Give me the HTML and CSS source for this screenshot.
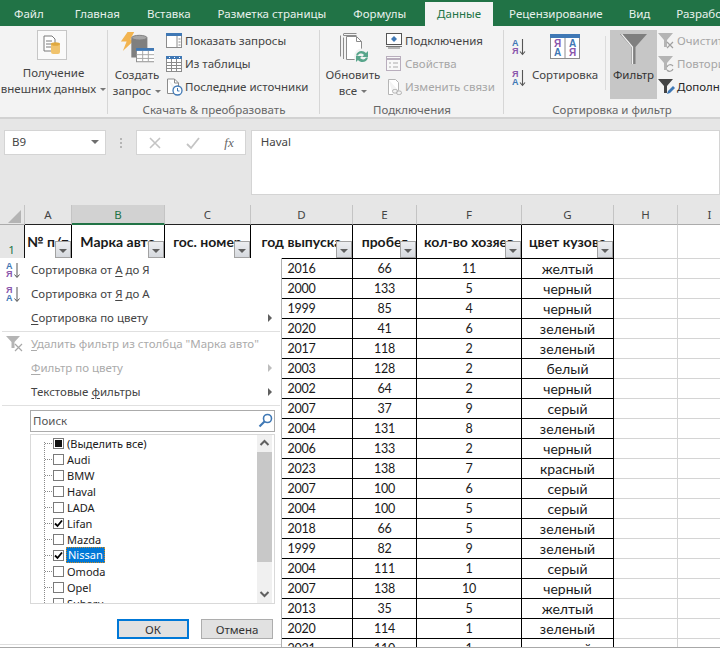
FILE: index.html
```html
<!DOCTYPE html>
<html lang="ru">
<head>
<meta charset="utf-8">
<title>Excel</title>
<link rel="stylesheet" href="styles.css">
</head>
<body>
<div class="app">
  <nav class="tabs">
    <span class="tab">Файл</span><span class="tab">Главная</span><span class="tab">Вставка</span><span class="tab">Разметка страницы</span><span class="tab">Формулы</span><span class="tab active">Данные</span><span class="tab">Рецензирование</span><span class="tab">Вид</span><span class="tab">Разработчик</span>
  </nav>
  <section class="ribbon">
    <div class="group g1">
      <div class="group-body">
        <div class="big big-get">
          <div class="icon-frame">
            <svg width="22" height="22" viewBox="0 0 22 22"><path d="M3 2h8l3 3v12H3z" fill="#fff" stroke="#7a7a7a"/><path d="M5 7h6M5 10h6M5 13h5" stroke="#7a7a7a"/><rect x="10" y="9" width="9" height="11" rx="2" fill="#f0c36d"/><ellipse cx="14.500" cy="10" rx="4.500" ry="1.800" fill="#e0a93f"/></svg>
          </div>
          <div class="big-label">Получение<br>внешних данных <i class="caret"></i></div>
        </div>
      </div>
      <div class="group-label"></div>
    </div>
    <div class="group g2">
      <div class="group-body">
        <div class="big big-query">
          <svg class="big-icon" width="34" height="34" viewBox="0 0 36 36"><path d="M8 0h7l-4 8h5L3 20l4-10H1z" fill="#f2b450"/><path d="M12 7c0-4 17-4 17 0v20H12z" fill="#7f7f7f"/><ellipse cx="20.500" cy="6" rx="8" ry="2.500" fill="#a6a6a6" stroke="#7f7f7f"/><rect x="17.500" y="17.500" width="19" height="14" fill="#fff" stroke="#8c8c8c"/><rect x="17" y="17" width="20" height="3" fill="#3f78b5"/><path d="M17.500 24h19M17.500 28h19M24 20v11M30 20v11" stroke="#a6a6a6"/></svg>
          <div class="big-label">Создать<br>запрос <i class="caret"></i></div>
        </div>
        <div class="small-col col-q">
          <div class="small"><svg width="17" height="16" viewBox="0 0 17 16"><rect x=".5" y=".5" width="15" height="14" fill="#fff" stroke="#8c8c8c"/><rect y="0" width="16" height="3" fill="#3f78b5"/><path d="M11 3v12M12.500 6h2M12.500 9h2M12.500 12h2" stroke="#8c8c8c"/></svg><span>Показать запросы</span></div>
          <div class="small"><svg width="17" height="16" viewBox="0 0 17 16"><rect x=".5" y=".5" width="15" height="15" fill="#fff" stroke="#8c8c8c"/><rect y="0" width="16" height="3" fill="#3f78b5"/><path d="M1 6.500h14M1 9.500h14M1 12.500h14M5.500 3v12M10.500 3v12" stroke="#8c8c8c"/><path d="M3 1.500h1M8 1.500h1M13 1.500h1" stroke="#fff"/></svg><span>Из таблицы</span></div>
          <div class="small"><svg width="17" height="18" viewBox="0 0 17 18"><path d="M1.500 1h7l4 4v7M9 15.500H1.500V1" fill="#fff" stroke="#8c8c8c"/><path d="M8.500 1v4h4" fill="none" stroke="#8c8c8c"/><circle cx="11.500" cy="12.500" r="4.500" fill="#fff" stroke="#3f78b5" stroke-width="1.300"/><path d="M11.500 10v3h2" fill="none" stroke="#3f78b5"/></svg><span>Последние источники</span></div>
        </div>
      </div>
      <div class="group-label">Скачать &amp; преобразовать</div>
    </div>
    <div class="group g3">
      <div class="group-body">
        <div class="big big-refresh">
          <svg class="big-icon" width="32" height="32" viewBox="0 0 32 32"><path d="M1.500 2.500v21M4.500.5h13M4.500 4.500V26" fill="none" stroke="#8c8c8c"/><path d="M7.500 3.500h10l5 5v18h-15z" fill="#fff" stroke="#8c8c8c"/><path d="M17.500 3.500v5h5" fill="none" stroke="#8c8c8c"/><path d="M4.500 1v1.500h13" fill="none" stroke="#8c8c8c"/><circle cx="23" cy="23.500" r="8" fill="#f3f3f3"/><path d="M17 22.500c1-5 7-6 10-2.500l2-2v6h-6l2-2c-2-2-5-2-6 .5zM29 24.500c-1 5-7 6-10 2.500l-2 2v-6h6l-2 2c2 2 5 2 6-.5z" fill="#58a58b"/></svg>
          <div class="big-label">Обновить<br>все <i class="caret"></i></div>
        </div>
        <div class="small-col col-c">
          <div class="small"><svg width="17" height="16" viewBox="0 0 17 16"><rect x=".5" y=".5" width="15" height="11" fill="#fff" stroke="#555"/><path d="M0 13.500h16M2 15h12" stroke="#777"/><path d="M8 3l3 3-3 3-3-3z" fill="#3f78b5"/></svg><span>Подключения</span></div>
          <div class="small off"><svg width="17" height="16" viewBox="0 0 17 16"><rect x=".5" y=".5" width="14" height="14" fill="#f8f8f8" stroke="#b9aebd"/><path d="M1 3h13" stroke="#b9aebd" stroke-width="2"/><path d="M3 7h2M3 11h2M7 7h5M7 11h5" stroke="#aaa"/></svg><span>Свойства</span></div>
          <div class="small off"><svg width="17" height="18" viewBox="0 0 17 18"><path d="M2.500 1.500h7l3 3v8M7 16.500H2.500v-15" fill="#fff" stroke="#b5b5b5"/><rect x="6.500" y="11.500" width="5" height="3.500" rx="1.700" fill="none" stroke="#b5b5b5"/><rect x="10.500" y="13" width="5" height="3.500" rx="1.700" fill="none" stroke="#b5b5b5"/></svg><span>Изменить связи</span></div>
        </div>
      </div>
      <div class="group-label">Подключения</div>
    </div>
    <div class="group g4">
      <div class="group-body">
        <div class="sort-col">
          <svg width="18" height="20" viewBox="0 0 18 20"><text class="lt lt-b" x="0" y="8">А</text><text class="lt lt-p" x="0" y="16">Я</text><path d="M10.500 1v15M8 13.500l2.500 3 2.500-3" fill="none" stroke="#555" stroke-width="1.100"/></svg>
          <svg width="18" height="20" viewBox="0 0 18 20"><text class="lt lt-p" x="0" y="8">Я</text><text class="lt lt-b" x="0" y="16">А</text><path d="M10.500 1v15M8 13.500l2.500 3 2.500-3" fill="none" stroke="#555" stroke-width="1.100"/></svg>
        </div>
        <div class="big big-sort">
          <svg class="big-icon" width="30" height="26" viewBox="0 0 30 26"><rect x=".5" y=".5" width="29" height="24" fill="#fff" stroke="#8c8c8c"/><rect width="30" height="4" fill="#3f78b5"/><path d="M15 4v20" stroke="#8c8c8c"/><text class="lt2 lt-p" x="4" y="13">Я</text><text class="lt2 lt-b" x="4" y="22">А</text><text class="lt2 lt-b" x="19" y="13">А</text><text class="lt2 lt-p" x="19" y="22">Я</text></svg>
          <div class="big-label">Сортировка</div>
        </div>
        <i class="thin-sep"></i>
        <div class="big big-filter">
          <svg class="big-icon" width="32" height="30" viewBox="0 0 32 30"><path d="M0 0h27L15.500 13v17h-4V13z" transform="translate(2 0)" fill="#7f7f7f"/><path d="M3 0l11 13v17M29 0" fill="none" stroke="#f2f2f2" stroke-width="1.200" transform="translate(.5 0)"/></svg>
          <div class="big-label">Фильтр</div>
        </div>
        <div class="small-col col-f">
          <div class="small off"><svg width="17" height="18" viewBox="0 0 17 18"><path d="M0 1h15L9 8v7H6V8z" fill="#b5b5b5"/><path d="M9 10l6 6M15 10l-6 6" stroke="#a0a0a0" stroke-width="1.200"/></svg><span>Очистить</span></div>
          <div class="small off"><svg width="17" height="18" viewBox="0 0 17 18"><path d="M0 1h15L9 8v7H6V8z" fill="#b5b5b5"/><path d="M9 12a3.500 3.500 0 0 1 6-1M15 14a3.500 3.500 0 0 1-6 1" fill="none" stroke="#a0a0a0" stroke-width="1.200"/></svg><span>Повторить</span></div>
          <div class="small dark"><svg width="17" height="18" viewBox="0 0 17 18"><path d="M0 1h15L9 8v7H6V8z" fill="#444"/><path d="M9 16l1-3 5-5 2 2-5 5z" fill="#3f78b5"/></svg><span>Дополнительно</span></div>
        </div>
      </div>
      <div class="group-label">Сортировка и фильтр</div>
    </div>
  </section>
  <section class="formula">
    <div class="namebox"><span>B9</span><i class="caret dark-caret"></i></div>
    <i class="dots"></i>
    <div class="fx-box">
      <svg width="14" height="14" viewBox="0 0 14 14"><path d="M2 2l10 10M12 2L2 12" stroke="#c4c4c4" stroke-width="1.600"/></svg>
      <svg width="16" height="14" viewBox="0 0 16 14"><path d="M2 8l4 4 8-10" fill="none" stroke="#c4c4c4" stroke-width="1.800"/></svg>
      <span class="fx">fx</span>
    </div>
    <div class="formula-input">Haval</div>
  </section>
  <section class="sheet">
    <table class="grid">
      <colgroup><col class="w0"><col class="wa"><col class="wb"><col class="wc"><col class="wd"><col class="we"><col class="wf"><col class="wg"><col class="wh"><col class="wi"></colgroup>
      <thead>
        <tr class="cols"><th class="corner"><svg width="13" height="13" viewBox="0 0 14 14"><path d="M14 0v14H0z" fill="#b4b4b4"/></svg></th><th>A</th><th class="sel">B</th><th>C</th><th>D</th><th>E</th><th>F</th><th>G</th><th class="out">H</th><th class="out">I</th></tr>
      </thead>
      <tbody>
        <tr class="head"><th class="rownum">1</th><td><div class="hcell"><span>№ п/п</span><i class="fbtn"></i></div></td><td><div class="hcell"><span>Марка авто</span><i class="fbtn"></i></div></td><td><div class="hcell"><span>гос. номер</span><i class="fbtn"></i></div></td><td><div class="hcell"><span>год выпуска</span><i class="fbtn"></i></div></td><td><div class="hcell"><span>пробег</span><i class="fbtn"></i></div></td><td><div class="hcell"><span>кол-во хозяев</span><i class="fbtn"></i></div></td><td><div class="hcell"><span>цвет кузова</span><i class="fbtn"></i></div></td><td class="e"></td><td class="e"></td></tr>
        <tr><th class="rownum">2</th><td></td><td></td><td></td><td>2016</td><td>66</td><td>11</td><td>желтый</td><td class="e"></td><td class="e"></td></tr>
        <tr><th class="rownum">3</th><td></td><td></td><td></td><td>2000</td><td>133</td><td>5</td><td>черный</td><td class="e"></td><td class="e"></td></tr>
        <tr><th class="rownum">4</th><td></td><td></td><td></td><td>1999</td><td>85</td><td>4</td><td>черный</td><td class="e"></td><td class="e"></td></tr>
        <tr><th class="rownum">5</th><td></td><td></td><td></td><td>2020</td><td>41</td><td>6</td><td>зеленый</td><td class="e"></td><td class="e"></td></tr>
        <tr><th class="rownum">6</th><td></td><td></td><td></td><td>2017</td><td>118</td><td>2</td><td>зеленый</td><td class="e"></td><td class="e"></td></tr>
        <tr><th class="rownum">7</th><td></td><td></td><td></td><td>2003</td><td>128</td><td>2</td><td>белый</td><td class="e"></td><td class="e"></td></tr>
        <tr><th class="rownum">8</th><td></td><td></td><td></td><td>2002</td><td>64</td><td>2</td><td>черный</td><td class="e"></td><td class="e"></td></tr>
        <tr><th class="rownum">9</th><td></td><td></td><td></td><td>2007</td><td>37</td><td>9</td><td>серый</td><td class="e"></td><td class="e"></td></tr>
        <tr><th class="rownum">10</th><td></td><td></td><td></td><td>2004</td><td>131</td><td>8</td><td>зеленый</td><td class="e"></td><td class="e"></td></tr>
        <tr><th class="rownum">11</th><td></td><td></td><td></td><td>2006</td><td>133</td><td>2</td><td>черный</td><td class="e"></td><td class="e"></td></tr>
        <tr><th class="rownum">12</th><td></td><td></td><td></td><td>2023</td><td>138</td><td>7</td><td>красный</td><td class="e"></td><td class="e"></td></tr>
        <tr><th class="rownum">13</th><td></td><td></td><td></td><td>2007</td><td>100</td><td>6</td><td>серый</td><td class="e"></td><td class="e"></td></tr>
        <tr><th class="rownum">14</th><td></td><td></td><td></td><td>2004</td><td>100</td><td>5</td><td>серый</td><td class="e"></td><td class="e"></td></tr>
        <tr><th class="rownum">15</th><td></td><td></td><td></td><td>2018</td><td>66</td><td>5</td><td>зеленый</td><td class="e"></td><td class="e"></td></tr>
        <tr><th class="rownum">16</th><td></td><td></td><td></td><td>1999</td><td>82</td><td>9</td><td>зеленый</td><td class="e"></td><td class="e"></td></tr>
        <tr><th class="rownum">17</th><td></td><td></td><td></td><td>2004</td><td>111</td><td>1</td><td>серый</td><td class="e"></td><td class="e"></td></tr>
        <tr><th class="rownum">18</th><td></td><td></td><td></td><td>2007</td><td>138</td><td>10</td><td>черный</td><td class="e"></td><td class="e"></td></tr>
        <tr><th class="rownum">19</th><td></td><td></td><td></td><td>2013</td><td>35</td><td>5</td><td>желтый</td><td class="e"></td><td class="e"></td></tr>
        <tr><th class="rownum">20</th><td></td><td></td><td></td><td>2020</td><td>114</td><td>1</td><td>зеленый</td><td class="e"></td><td class="e"></td></tr>
        <tr><th class="rownum">21</th><td></td><td></td><td></td><td>2021</td><td>110</td><td>1</td><td>черный</td><td class="e"></td><td class="e"></td></tr>
      </tbody>
    </table>
    <aside class="menu">
      <div class="mi"><svg class="mi-icon" width="18" height="20" viewBox="0 0 18 20"><text class="lt lt-b" x="0" y="8">А</text><text class="lt lt-p" x="0" y="16">Я</text><path d="M11 2v14M8.500 13.500l2.500 3 2.500-3" fill="none" stroke="#555"/></svg><span>Сортировка от <u>А</u> до Я</span></div>
      <div class="mi"><svg class="mi-icon" width="18" height="20" viewBox="0 0 18 20"><text class="lt lt-p" x="0" y="8">Я</text><text class="lt lt-b" x="0" y="16">А</text><path d="M11 2v14M8.500 13.500l2.500 3 2.500-3" fill="none" stroke="#555"/></svg><span>Сортировка от <u>Я</u> до А</span></div>
      <div class="mi"><span><u>С</u>ортировка по цвету</span><i class="arrow"></i></div>
      <hr class="msep">
      <div class="mi off"><svg class="mi-icon" width="18" height="18" viewBox="0 0 18 18"><path d="M0 1h14L8.500 7v6h-3V7z" fill="#b5b5b5"/><path d="M9 9l7 7M16 9l-7 7" stroke="#a8a8a8" stroke-width="1.200"/></svg><span><u>У</u>далить фильтр из столбца "Марка авто"</span></div>
      <div class="mi off"><span><u>Ф</u>ильтр по цвету</span><i class="arrow"></i></div>
      <div class="mi"><span>Текстовые <u>ф</u>ильтры</span><i class="arrow"></i></div>
      <hr class="msep">
      <div class="search"><span>Поиск</span><svg width="15" height="15" viewBox="0 0 15 15"><circle cx="9.500" cy="5.500" r="4" fill="none" stroke="#3f78b5" stroke-width="1.600"/><path d="M6.500 8.500L1.500 13.500" stroke="#3f78b5" stroke-width="2.200"/></svg></div>
      <div class="listbox">
        <ul class="tree">
          <li><b class="cb mixed"></b><span>(Выделить все)</span></li>
          <li><b class="cb"></b><span>Audi</span></li>
          <li><b class="cb"></b><span>BMW</span></li>
          <li><b class="cb"></b><span>Haval</span></li>
          <li><b class="cb"></b><span>LADA</span></li>
          <li><b class="cb on"><svg width="9" height="9" viewBox="0 0 9 9"><path d="M1 4.500l2.500 2.500L8 1.500" fill="none" stroke="#000" stroke-width="1.800"/></svg></b><span>Lifan</span></li>
          <li><b class="cb"></b><span>Mazda</span></li>
          <li><b class="cb on"><svg width="9" height="9" viewBox="0 0 9 9"><path d="M1 4.500l2.500 2.500L8 1.500" fill="none" stroke="#000" stroke-width="1.800"/></svg></b><span class="picked">Nissan</span></li>
          <li><b class="cb"></b><span>Omoda</span></li>
          <li><b class="cb"></b><span>Opel</span></li>
          <li><b class="cb"></b><span>Subaru</span></li>
        </ul>
        <div class="scroll">
          <svg width="15" height="17" viewBox="0 0 15 17"><path d="M3.500 10l4-4 4 4" fill="none" stroke="#606060" stroke-width="2"/></svg>
          <i class="thumb"></i>
          <svg class="sdown" width="15" height="16" viewBox="0 0 15 16"><path d="M3.500 6l4 4 4-4" fill="none" stroke="#606060" stroke-width="2"/></svg>
        </div>
      </div>
      <div class="actions"><button class="btn ok">ОК</button><button class="btn">Отмена</button></div>
    </aside>
  </section>
</div>
</body>
</html>
```
FILE: styles.css
```css
* { box-sizing: border-box; }
html, body { margin: 0; padding: 0; }
body { width: 720px; height: 648px; overflow: hidden; background: #fff; font-family: "Noto Sans", "Open Sans", sans-serif; font-size: 11.500px; color: #444; }
.app { width: 720px; height: 648px; display: flex; flex-direction: column; overflow: hidden; }

/* tabs */
.tabs { height: 26px; flex: none; background: #217346; display: flex; align-items: flex-end; color: #e8f1ec; font-size: 11.500px; white-space: nowrap; overflow: hidden; padding-left: 14px; }
.tab { height: 24px; line-height: 24px; margin-right: 27px; }
.tab:first-child { margin-right: 31px; }
.tab.active { background: #f3f3f3; color: #217346; padding: 0 12px; margin: 0 16px 0 -8px; }
.tab.active ~ .tab { margin-right: 26px; }

/* ribbon */
.ribbon { height: 93px; flex: none; background: #f3f3f3; border-bottom: 2px solid #d2d2d2; display: flex; }
.group { flex: none; display: flex; flex-direction: column; position: relative; height: 91px; }
.group::after { content: ""; position: absolute; right: 0; top: 4px; bottom: 3px; width: 1px; background: #d6d6d6; }
.g1 { width: 108px; }
.g2 { width: 212px; }
.g3 { width: 184px; }
.g4 { width: 216px; }
.g4::after { display: none; }
.group-body { height: 76px; display: flex; padding-top: 4px; }
.group-label { height: 15px; line-height: 15px; text-align: center; color: #666; white-space: nowrap; }
.big { display: flex; flex-direction: column; align-items: center; flex: none; }
.big-label { text-align: center; line-height: 16px; white-space: nowrap; color: #444; }
.big-get { width: 107px; }
.big-get .big-label { margin-top: 5px; }
.icon-frame { width: 30px; height: 30px; margin-right: 3px; background: #fafafa; border: 1px solid #c6c6c6; display: flex; align-items: center; justify-content: center; }
.caret { display: inline-block; width: 0; height: 0; border: 3px solid transparent; border-top: 3px solid #777; border-bottom: 0; vertical-align: middle; margin-left: 1px; }
.big-query { width: 58px; }
.big-query .big-icon { margin: 2px 0 0 0; }
.big-query .big-label { margin-top: 1px; }
.small-col { display: grid; grid-template-rows: repeat(3, 23px); flex: none; margin-top: -1px; }
.small { display: flex; align-items: center; white-space: nowrap; color: #444; }
.small svg { flex: none; margin-right: 2px; }
.small.off { color: #a6a6a6; }
.small.dark { color: #262626; }
.col-q { width: 150px; }
.big-refresh { width: 66px; }
.big-refresh .big-icon { margin: 3px 0 0 4px; }
.big-refresh .big-label { margin-top: 2px; }
.sort-col { width: 19px; margin-left: 8px; display: flex; flex-direction: column; gap: 11px; flex: none; padding-top: 8px; }
.big-sort { width: 68px; }
.big-sort .big-icon { margin-top: 4px; }
.big-sort .big-label { margin-top: 7px; }
.thin-sep { width: 1px; height: 54px; background: #dcdcdc; margin: 6px 4px 0 6px; flex: none; }
.big-filter { width: 47px; height: 69px; background: #c6c6c6; }
.big-filter .big-icon { margin-top: 4px; }
.big-filter .big-label { margin-top: 3px; color: #333; }
.col-f { margin-left: 1px; }
.lt { font: bold 9px "Liberation Sans", sans-serif; }
.lt2 { font: bold 10px "Liberation Sans", sans-serif; }
.lt-b { fill: #3f78b5; }
.lt-p { fill: #8a56ac; }

/* formula bar */
.formula { height: 86px; flex: none; background: #e6e6e6; display: flex; align-items: flex-start; padding: 11px 0 0 4px; }
.namebox { width: 102px; height: 25px; background: #fff; border: 1px solid #d4d4d4; display: flex; align-items: center; justify-content: space-between; padding: 0 6px 2px 7px; color: #444; }
.dark-caret { border-width: 4px; border-top-color: #6e6e6e; }
.dots { width: 2px; height: 10px; margin: 8px 14px 0 14px; flex: none; background: repeating-linear-gradient(#b5b5b5 0 2px, transparent 2px 4px); }
.fx-box { width: 110px; height: 25px; background: #fff; border: 1px solid #d4d4d4; display: flex; align-items: center; justify-content: space-between; padding: 0 11px 0 11px; }
.fx { font: italic 400 13px "Liberation Serif", serif; color: #666; }
.formula-input { width: 470px; height: 65px; margin-left: 5px; background: #fff; border: 1px solid #d4d4d4; padding: 2px 9px; line-height: 18px; color: #444; }

/* sheet */
.sheet { flex: 1; position: relative; overflow: hidden; border-bottom: 1px solid #a8a8a8; min-height: 0; }
.grid { border-collapse: separate; border-spacing: 0; table-layout: fixed; width: 742px; font-family: "Lato", "Noto Sans", sans-serif; font-size: 14px; color: #1a1a1a; }
.w0 { width: 25px; } .wa { width: 47px; } .wb { width: 93px; } .wc { width: 86px; } .wd { width: 102px; } .we { width: 64px; } .wf { width: 105px; } .wg { width: 92px; } .wh { width: 64px; } .wi { width: 64px; }
.cols th { height: 20px; padding: 0; background: #e6e6e6; font: 400 11.500px "Noto Sans", sans-serif; color: #444; border-right: 1px solid #c4c4c4; border-bottom: 1px solid #222; }
.cols th.out { border-bottom-color: #ababab; border-right-color: #c9c9c9; }
.cols th.corner { text-align: right; border-bottom-color: #ababab; padding: 3px 3px 0 0; line-height: 0; }
.cols th.sel { background: #d2d2d2; color: #217346; border-bottom: 2px solid #217346; }
.grid tbody tr { height: 20px; }
.grid tbody tr.head { height: 34px; }
.rownum { background: #e6e6e6; padding: 0 1px 1px 0; font: 400 11.500px "Noto Sans", sans-serif; border-right: 1px solid #111; border-bottom: 1px solid #ababab; color: #217346; vertical-align: bottom; text-align: center; }
td { padding: 0; text-align: center; white-space: nowrap; overflow: hidden; border-right: 1px solid #000; border-bottom: 1px solid #000; line-height: 17px; }
td.e { border-right-color: #d4d4d4; border-bottom-color: #d4d4d4; }
tbody tr:not(.head) td:nth-child(-n+7) { font-size: 12.500px; letter-spacing: -.2px; }
.head td { font-weight: 700; }
.hcell { position: relative; height: 33px; display: flex; justify-content: center; align-items: center; white-space: nowrap; overflow: hidden; }
.fbtn { position: absolute; right: 0; bottom: 0; width: 16px; height: 17px; background: linear-gradient(#eceef1, #d6d9de); border: 1px solid #a2a2a2; }
.fbtn::after { content: ""; position: absolute; left: 3px; top: 7px; border: 4px solid transparent; border-top: 4px solid #5f5f5f; border-bottom: 0; }

/* filter menu */
.menu { position: absolute; left: 0; top: 53px; width: 282px; height: 390px; background: #fff; border-right: 1px solid #b0b0b0; color: #444; }
.menu::after { content: ""; position: absolute; left: 0; right: 0; bottom: 3px; height: 1px; background: #dedede; }
.mi { height: 24px; position: relative; display: flex; align-items: center; padding: 0 0 2px 31px; white-space: nowrap; }
.mi.off { color: #ababab; }
.mi u { text-underline-offset: 2px; }
.mi-icon { position: absolute; left: 6px; top: 3px; }
.arrow { position: absolute; left: 268px; top: 8px; width: 0; height: 0; border: 4px solid transparent; border-left: 4px solid #606060; border-right: 0; }
.mi.off .arrow { border-left-color: #bdbdbd; }
.msep { height: 1px; margin: 1px 0 0 2px; border: 0; background: #e0e0e0; width: 278px; }
.search { width: 245px; height: 22px; margin: 4px 0 0 30px; border: 1px solid #ababab; display: flex; align-items: center; justify-content: space-between; padding: 0 1px 2px 2px; color: #555; }
.listbox { width: 245px; height: 170px; margin: 2px 0 0 30px; border: 1px solid #d9d9d9; display: flex; justify-content: space-between; overflow: hidden; }
.tree { list-style: none; margin: 0; padding: 0 0 0 13px; flex: 1; overflow: hidden; background-image: repeating-linear-gradient(#8a8a8a 0 1px, transparent 1px 2px); background-size: 1px 100%; background-position: 13px 7px; background-repeat: no-repeat; color: #1a1a1a; }
.tree li { height: 16px; display: flex; align-items: center; padding-left: 9px; position: relative; font-size: 11px; white-space: nowrap; }
.tree li::before { content: ""; position: absolute; left: 1px; top: 8px; width: 8px; height: 1px; background-image: repeating-linear-gradient(90deg, #8a8a8a 0 1px, transparent 1px 2px); }
.cb { width: 11px; height: 11px; border: 1px solid #7a7a7a; background: #fff; margin-right: 3px; flex: none; display: block; line-height: 0; padding: 0; }
.cb.mixed { box-shadow: inset 0 0 0 1px #fff; background: #111; }
.picked { background: #0078d7; color: #fff; padding: 0 2px; margin-left: -1px; outline: 1px dotted #d08a20; outline-offset: -1px; line-height: 16px; }
.scroll { width: 15px; margin-right: 2px; background: #f0f0f0; display: flex; flex-direction: column; flex: none; }
.scroll svg { flex: none; }
.thumb { display: block; height: 110px; background: #c8c8c8; flex: none; }
.sdown { margin-top: 24px; }
.actions { display: flex; gap: 12px; margin: 15px 0 0 117px; }
.btn { width: 72px; height: 20px; padding: 0; font: 400 11.500px "Noto Sans", sans-serif; color: #333; background: #e1e1e1; border: 1px solid #adadad; }
.btn.ok { border: 2px solid #0078d7; }
```
